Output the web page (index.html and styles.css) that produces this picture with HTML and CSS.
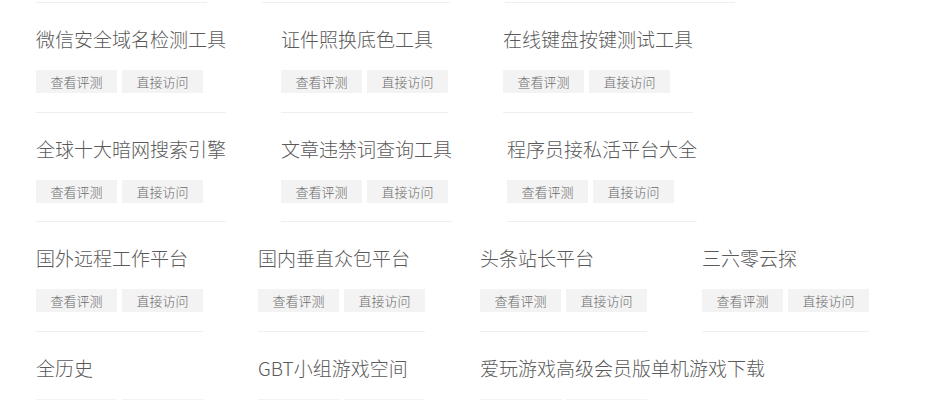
FILE: index.html
```html
<!DOCTYPE html>
<html lang="zh-CN">
<head>
<meta charset="utf-8">
<title>网站导航</title>
<link rel="stylesheet" href="styles.css">
</head>
<body>
<div class="page">
  <div class="prev-row">
    <span class="seg seg-a"></span>
    <span class="seg seg-b"></span>
    <span class="seg seg-c"></span>
  </div>
  <ul class="sites">
    <li class="site"><h3 class="site-title">微信安全域名检测工具</h3><div class="site-actions"><a class="btn">查看评测</a><a class="btn">直接访问</a></div></li>
    <li class="site"><h3 class="site-title">证件照换底色工具</h3><div class="site-actions"><a class="btn">查看评测</a><a class="btn">直接访问</a></div></li>
    <li class="site"><h3 class="site-title">在线键盘按键测试工具</h3><div class="site-actions"><a class="btn">查看评测</a><a class="btn">直接访问</a></div></li>
    <li class="site"><h3 class="site-title">全球十大暗网搜索引擎</h3><div class="site-actions"><a class="btn">查看评测</a><a class="btn">直接访问</a></div></li>
    <li class="site"><h3 class="site-title">文章违禁词查询工具</h3><div class="site-actions"><a class="btn">查看评测</a><a class="btn">直接访问</a></div></li>
    <li class="site"><h3 class="site-title">程序员接私活平台大全</h3><div class="site-actions"><a class="btn">查看评测</a><a class="btn">直接访问</a></div></li>
    <li class="site"><h3 class="site-title">国外远程工作平台</h3><div class="site-actions"><a class="btn">查看评测</a><a class="btn">直接访问</a></div></li>
    <li class="site"><h3 class="site-title">国内垂直众包平台</h3><div class="site-actions"><a class="btn">查看评测</a><a class="btn">直接访问</a></div></li>
    <li class="site"><h3 class="site-title">头条站长平台</h3><div class="site-actions"><a class="btn">查看评测</a><a class="btn">直接访问</a></div></li>
    <li class="site"><h3 class="site-title">三六零云探</h3><div class="site-actions"><a class="btn">查看评测</a><a class="btn">直接访问</a></div></li>
    <li class="site"><h3 class="site-title">全历史</h3><div class="site-actions"><a class="btn">查看评测</a><a class="btn">直接访问</a></div></li>
    <li class="site"><h3 class="site-title">GBT小组游戏空间</h3><div class="site-actions"><a class="btn">查看评测</a><a class="btn">直接访问</a></div></li>
    <li class="site"><h3 class="site-title">爱玩游戏高级会员版单机游戏下载</h3><div class="site-actions"><a class="btn">查看评测</a><a class="btn">直接访问</a></div></li>
  </ul>
</div>
</body>
</html>
```
FILE: styles.css
```css
html, body {
  margin: 0;
  padding: 0;
  background: #fff;
}
body {
  font-family: "Noto Sans CJK SC", "Noto Sans", sans-serif;
  overflow: hidden;
}
.page {
  padding-left: 36px;
  width: 850px;
}
.prev-row {
  display: flex;
  gap: 55px;
}
.seg {
  display: block;
  height: 2px;
  border-bottom: 1px solid #efefef;
}
.seg-a { width: 171px; }
.seg-b { width: 188px; }
.seg-c { width: 230px; }
.sites {
  list-style: none;
  margin: 0;
  padding: 0;
  display: flex;
  flex-wrap: wrap;
  column-gap: 55px;
}
.site {
  padding: 24px 0 18.5px;
  border-bottom: 1px solid #efefef;
}
.site-title {
  margin: 0;
  font-size: 19px;
  line-height: 24px;
  font-weight: 300;
  color: #5a5a5a;
  white-space: nowrap;
}
.site-actions {
  display: flex;
  gap: 5px;
  margin-top: 19px;
}
.btn {
  display: block;
  width: 81px;
  height: 23px;
  line-height: 23px;
  text-align: center;
  font-size: 13px;
  font-weight: 300;
  color: #6a6a6a;
  background: #f3f3f3;
}
```
